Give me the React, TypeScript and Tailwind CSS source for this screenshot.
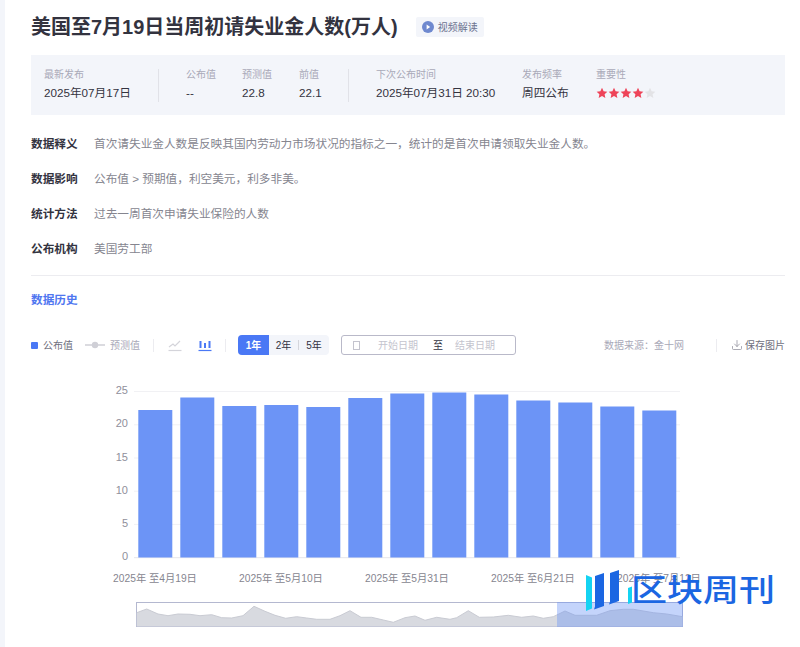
import { Download } from "lucide-react";

const font = { fontFamily: '"Liberation Sans", "Noto Sans CJK SC", sans-serif' };

// tops of the bars in page pixels
const barTops = [410, 397.5, 406, 405, 407, 398, 393.5, 392.5, 394.5, 400.5, 402.5, 406.5, 410.5];
const yTicks = [
  { label: "25", y: 391.5 },
  { label: "20", y: 424.8 },
  { label: "15", y: 458 },
  { label: "10", y: 491.2 },
  { label: "5", y: 524.4 },
  { label: "0", y: 557.7 },
];
const xLabels = [
  { label: "2025年 至4月19日", x: 155 },
  { label: "2025年 至5月10日", x: 281 },
  { label: "2025年 至5月31日", x: 407 },
  { label: "2025年 至6月21日", x: 533 },
  { label: "2025年 至7月12日", x: 659 },
];
const miniLine =
  "136.7,612.7 146.7,609 158,614 168,615.7 178,614 190,614.3 200,615.7 211.7,614.7 221.7,617.7 231.7,618 243,615.7 254,606.3 265,611.3 275,615.3 285.7,618.3 296.7,616.7 306.7,618 316.7,619.3 330,619.3 340,615.7 350,610.7 361,617.3 371.7,617.3 383.3,620 393.3,622.3 405,617.7 415,616 425,620.3 436.7,617.3 450,619.3 456.7,617.7 468.3,610.7 479.3,617.3 493.3,617 508.3,615.3 521.7,617.3 533.3,616 543.3,618.3 553.3,616.7 565,611 575,615.3 596.7,615.3 610,610.7 623.3,609.3 633.3,609.3 653.3,612.7 666.7,614 682.5,616.7";

const Stat = ({ label, value, className }: { label: string; value: string; className: string }) => (
  <div className={className}>
    <div className="text-[10px] leading-[16px] text-[#a9a9b8]">{label}</div>
    <div className="mt-[1px] text-[11.67px] leading-[18px] text-[#33333f]">{value}</div>
  </div>
);

const Divider = ({ className }: { className: string }) => <div className={`w-px shrink-0 ${className}`} />;

const Star = ({ color }: { color: string }) => (
  <svg width="12" height="12" viewBox="0 0 24 24" fill={color}>
    <path d="M12 1.5l3.2 6.9 7.5.9-5.5 5.1 1.5 7.4L12 18.1l-6.7 3.7 1.5-7.4L1.3 9.3l7.5-.9z" />
  </svg>
);

const InfoRow = ({ label, text }: { label: string; text: string }) => (
  <div className="flex h-[35px] items-center text-[11.67px]">
    <div className="w-[63px] font-bold text-[#33333f]">{label}</div>
    <div className="text-[#85858f]">{text}</div>
  </div>
);

const App = () => {
  return (
    <div style={font} className="relative flex h-[647px] w-[800px] overflow-hidden bg-white">
      <div className="w-[5px] shrink-0 bg-[#f3f5fa]" />
      <div className="w-[795px] pl-[26px] pr-[15px]">
        <div className="flex h-[55px] items-center pb-[1px]">
          <h1 className="text-[20px] font-bold leading-[28px] text-[#33333f]">美国至7月19日当周初请失业金人数(万人)</h1>
          <div className="ml-[18px] flex h-[20px] w-[68px] items-center justify-center rounded-[2px] bg-[#f3f5fa] text-[10px] text-[#6c7390]">
            <svg width="12" height="12" viewBox="0 0 12 12" className="mr-[4px]">
              <circle cx="6" cy="6" r="6" fill="#6f89cf" />
              <path d="M4.6 3.6l3.6 2.4-3.6 2.4z" fill="#fff" />
            </svg>
            视频解读
          </div>
        </div>

        <div className="flex h-[60px] items-center bg-[#f3f5fa] pb-[2px]">
          <Stat label="最新发布" value="2025年07月17日" className="ml-[13px] w-[114px]" />
          <Divider className="mt-[2px] h-[33px] bg-[#e1e2e8]" />
          <Stat label="公布值" value="--" className="ml-[27px] w-[56px]" />
          <Stat label="预测值" value="22.8" className="w-[57px]" />
          <Stat label="前值" value="22.1" className="w-[49px]" />
          <Divider className="mt-[2px] h-[33px] bg-[#e1e2e8]" />
          <Stat label="下次公布时间" value="2025年07月31日 20:30" className="ml-[27px] w-[146px]" />
          <Stat label="发布频率" value="周四公布" className="w-[74px]" />
          <div>
            <div className="text-[10px] leading-[16px] text-[#a9a9b8]">重要性</div>
            <div className="mt-[2px] flex h-[17px] items-center">
              <Star color="#ee4459" />
              <Star color="#ee4459" />
              <Star color="#ee4459" />
              <Star color="#ee4459" />
              <Star color="#e3e3e6" />
            </div>
          </div>
        </div>

        <div className="mt-[11px]">
          <InfoRow label="数据释义" text="首次请失业金人数是反映其国内劳动力市场状况的指标之一，统计的是首次申请领取失业金人数。" />
          <InfoRow label="数据影响" text="公布值 > 预期值，利空美元，利多非美。" />
          <InfoRow label="统计方法" text="过去一周首次申请失业保险的人数" />
          <InfoRow label="公布机构" text="美国劳工部" />
        </div>

        <div className="mt-[9px] h-px bg-[#ececf0]" />
        <div className="mt-[15px] text-[11.67px] font-bold leading-[18px] text-[#4f76f0]">数据历史</div>

        <div className="mt-[26px] flex h-[20px] items-center whitespace-nowrap text-[10px]">
          <div className="h-[7px] w-[7px] shrink-0 rounded-[1px] bg-[#4a78f5]" />
          <span className="ml-[5px] w-[42px] shrink-0 text-[#6f6f7d]">公布值</span>
          <svg width="20" height="8" viewBox="0 0 20 8" className="shrink-0">
            <path d="M0 4h20" stroke="#cfcfd6" strokeWidth="1.5" />
            <circle cx="10" cy="4" r="3.2" fill="#cfcfd6" />
          </svg>
          <span className="ml-[5px] w-[30px] shrink-0 text-[#a9a9b8]">预测值</span>
          <Divider className="ml-[13px] h-[13px] bg-[#ececf0]" />
          <svg width="14" height="14" viewBox="0 0 14 14" className="ml-[14px] shrink-0">
            <path d="M1 9l4-3 2 2 5-5" fill="none" stroke="#d4d4da" strokeWidth="1.2" />
            <path d="M0.5 12.5h13" stroke="#d4d4da" strokeWidth="1.2" />
          </svg>
          <svg width="14" height="14" viewBox="0 0 14 14" className="ml-[16px] shrink-0">
            <path d="M1.5 3h2v7h-2zM6 5h2v5H6zM10.5 3h2v7h-2z" fill="#4a78f5" />
            <path d="M0.5 12.5h13" stroke="#4a78f5" strokeWidth="1.2" />
          </svg>
          <Divider className="ml-[13px] h-[13px] bg-[#ececf0]" />
          <div className="ml-[12px] flex h-[20px] w-[91px] shrink-0 items-center overflow-hidden rounded-[4px] bg-[#f3f5fa] text-[#33333f]">
            <div className="flex h-full w-[31px] items-center justify-center bg-[#4a78f5] font-bold text-white">1年</div>
            <div className="w-[29px] text-center">2年</div>
            <div className="h-[10px] w-px bg-[#d5d6dc]" />
            <div className="w-[30px] text-center">5年</div>
          </div>
          <div className="ml-[12px] flex h-[20px] w-[175px] shrink-0 items-center rounded-[3px] border border-[#b9b9c9] text-[#c4c4ce]">
            <div className="ml-[11px] h-[9px] w-[7px] border border-[#c4c4ce]" />
            <span className="ml-[18px] w-[55px]">开始日期</span>
            <span className="w-[22px] text-[#33333f]">至</span>
            <span>结束日期</span>
          </div>
          <span className="ml-[88px] w-[112px] shrink-0 text-[#a9a9b8]">数据来源：金十网</span>
          <Divider className="h-[13px] bg-[#ececf0]" />
          <Download className="ml-[14px] h-[12px] w-[12px] shrink-0 text-[#8f8f9b]" strokeWidth={1.5} />
          <span className="ml-[2px] text-[#6f6f7d]">保存图片</span>
        </div>

        <svg width="754" height="272" viewBox="31 375 754 272" className="mt-[20px] block">
          {yTicks.map((t) => (
            <g key={t.label}>
              <line x1="134" x2="680" y1={t.y} y2={t.y} stroke={t.label === "0" ? "#e6e6ea" : "#f1f1f4"} />
              <text x="128" y={t.y + 2.5} textAnchor="end" fontSize="11" fill="#8f8f9b">
                {t.label}
              </text>
            </g>
          ))}
          {barTops.map((top, i) => (
            <rect key={i} x={138.3 + i * 42} y={top} width={34} height={557.5 - top} fill="#6c94f6" />
          ))}
          {xLabels.map((l) => (
            <text key={l.x} x={l.x} y="582" textAnchor="middle" fontSize="10.25" fill="#85858f">
              {l.label}
            </text>
          ))}
          <rect x="136.5" y="602.5" width="546" height="24" fill="#fff" stroke="#b4b8d0" />
          <polygon points={`136.7,626.5 ${miniLine} 682.5,626.5`} fill="#d8dae0" stroke="none" />
          <polyline points={miniLine} fill="none" stroke="#c9cbd3" />
          <rect x="557" y="602" width="126" height="25" fill="#6c94f6" fillOpacity="0.4" />
        </svg>
      </div>

      {/* watermark */}
      <div className="absolute left-[586px] top-[570px] flex h-[42px] w-[192px] items-start">
        <svg width="48" height="42" viewBox="586 570 48 42" className="shrink-0">
          <path d="M586 575l6 2.5v31l-6 2.5z" fill="#14d3f2" />
          <path d="M595 576l9-3v33l-10 3.5 1-3z" fill="#1b66e2" />
          <path d="M610 573l9-3v31l-10 3.5 1-3z" fill="#1b66e2" />
          <path d="M628 588l4-1.5v16l-4 1.5z" fill="#14d3f2" />
        </svg>
        <span className="-ml-[3px] mt-[1px] origin-center scale-y-[0.84] whitespace-nowrap text-[36px] font-medium leading-[40px] text-[#1b66e2]">区块周刊</span>
      </div>
    </div>
  );
};

export default App;
